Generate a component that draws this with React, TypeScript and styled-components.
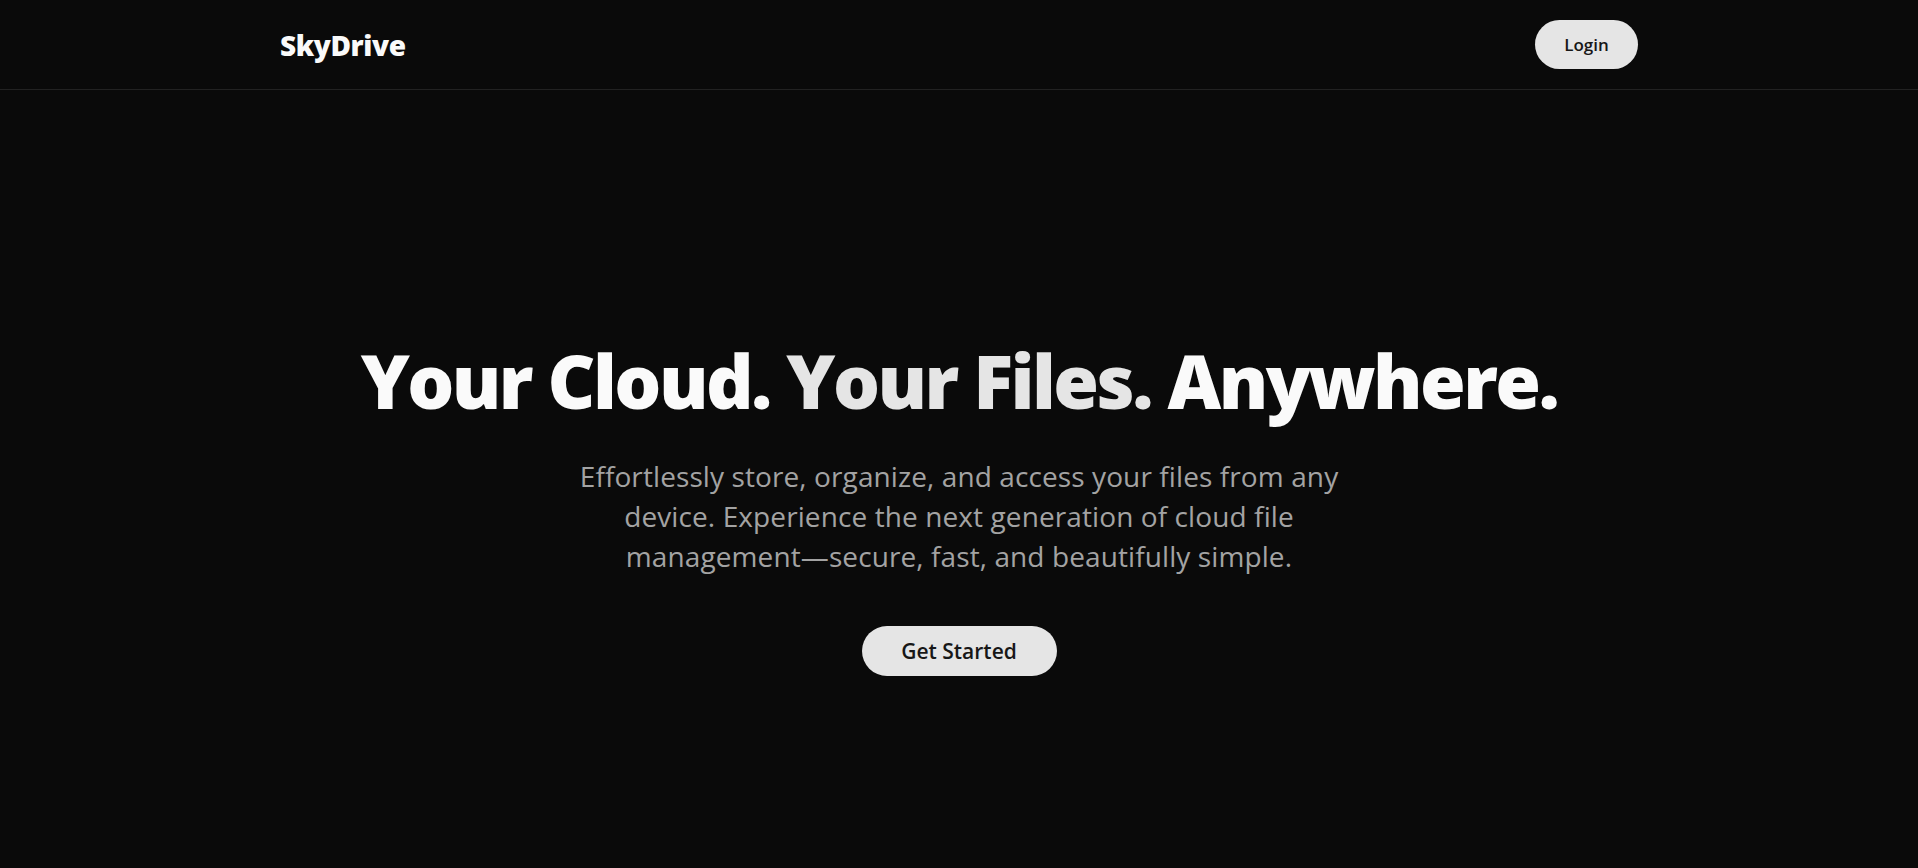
import React from "react";
import styled, { createGlobalStyle } from "styled-components";

const GlobalStyle = createGlobalStyle`
  html, body {
    margin: 0;
    padding: 0;
    background: #0a0a0a;
    color: #fafafa;
    font-family: "Open Sans", "Noto Sans", sans-serif;
  }
  * { box-sizing: border-box; }
`;

const Page = styled.div`
  min-height: 868px;
  background: #0a0a0a;
  display: flex;
  flex-direction: column;
`;

const Header = styled.header`
  border-bottom: 1px solid #222222;
`;

const HeaderInner = styled.div`
  max-width: 1358px;
  height: 89px;
  margin: 0 auto;
  display: flex;
  align-items: center;
  justify-content: space-between;
`;

const Logo = styled.div`
  font-size: 28px;
  font-weight: 800;
  letter-spacing: -0.015em;
  color: #fafafa;
  margin-top: 1px;
`;

const PillButton = styled.button<{ $w: number; $h: number; $size: number }>`
  width: ${(p) => p.$w}px;
  height: ${(p) => p.$h}px;
  border: none;
  border-radius: 999px;
  background: #e5e5e5;
  color: #171717;
  font-family: "Open Sans", "Noto Sans", sans-serif;
  font-size: ${(p) => p.$size}px;
  font-weight: 600;
  display: inline-flex;
  align-items: center;
  justify-content: center;
  cursor: pointer;
`;

const Hero = styled.main`
  display: flex;
  flex-direction: column;
  align-items: center;
  padding-top: 254px;
  text-align: center;
`;

const Headline = styled.h1`
  margin: 0;
  font-size: 74px;
  line-height: 1;
  font-weight: 800;
  letter-spacing: -0.035em;
  color: #fafafa;
`;

const Dim = styled.span`
  color: #e5e5e5;
`;

const Lead = styled.p`
  margin: 38px 0 0;
  max-width: 800px;
  font-size: 28px;
  line-height: 40px;
  letter-spacing: 0.1px;
  color: #a3a3a3;
`;

const CtaWrap = styled.div`
  margin-top: 50px;
`;

export default function App() {
  return (
    <>
      <GlobalStyle />
      <Page>
        <Header>
          <HeaderInner>
            <Logo>SkyDrive</Logo>
            <PillButton $w={103} $h={49} $size={17}>Login</PillButton>
          </HeaderInner>
        </Header>
        <Hero>
          <Headline>
            Your Cloud. <Dim>Your Files.</Dim> Anywhere.
          </Headline>
          <Lead>
            Effortlessly store, organize, and access your files from any device.
            Experience the next generation of cloud file management—secure, fast,
            and beautifully simple.
          </Lead>
          <CtaWrap>
            <PillButton $w={195} $h={50} $size={21}>Get Started</PillButton>
          </CtaWrap>
        </Hero>
      </Page>
    </>
  );
}
